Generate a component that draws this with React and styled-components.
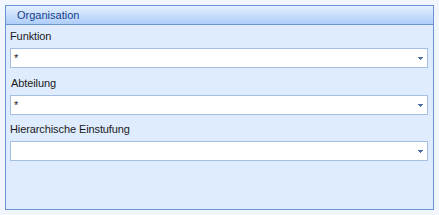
import React from "react";
import styled, { createGlobalStyle } from "styled-components";

const Global = createGlobalStyle`
  html, body { margin: 0; padding: 0; background: #f1f6fe; }
  body { font-family: Tahoma, "DejaVu Sans", "Liberation Sans", sans-serif; }
`;

const Page = styled.div`
  width: 439px;
  height: 215px;
  padding: 5px 5px 5px 5px;
  box-sizing: border-box;
  background: #f1f6fe;
`;

const Panel = styled.div`
  width: 429px;
  height: 205px;
  box-sizing: border-box;
  border: 1px solid #6a93d2;
  background: #dfecfe;
  display: flex;
  flex-direction: column;
`;

const Header = styled.div`
  height: 19px;
  box-sizing: border-box;
  border-bottom: 1px solid #6a93d2;
  background: linear-gradient(to bottom, #e6f0ff 0%, #c9defd 50%, #afcefa 100%);
  color: #15428b;
  font-family: "Liberation Sans", sans-serif;
  font-size: 11px;
  line-height: 18px;
  padding-left: 11px;
`;

const Body = styled.div`
  display: flex;
  flex-direction: column;
  padding: 5px 5px 0 4px;
`;

const Field = styled.div`
  display: flex;
  flex-direction: column;
  margin-top: ${(p) => p.$top}px;
`;

const Label = styled.div`
  font-family: "Liberation Sans", sans-serif;
  font-size: 11px;
  line-height: 13px;
  letter-spacing: -0.1px;
  color: #1a1a1a;
  height: 14px;
  margin-bottom: 4px;
  padding-left: ${(p) => p.$indent || 0}px;
`;

const Select = styled.div`
  width: 418px;
  height: 20px;
  box-sizing: border-box;
  border: 1px solid #a5bfe2;
  background: #ffffff;
  display: flex;
  align-items: center;
  justify-content: space-between;
  padding: 0 4px 0 3px;
  font-family: "Liberation Sans", sans-serif;
  font-size: 11px;
  color: #1a1a1a;
`;

const Value = styled.span`
  line-height: 18px;
`;

const Arrow = styled.svg`
  display: block;
  width: 5px;
  height: 3px;
  margin-top: 1px;
`;

function DropArrow() {
  return (
    <Arrow viewBox="0 0 5 3">
      <rect x="0" y="0" width="5" height="1" fill="#4c6fa6" />
      <rect x="1" y="1" width="3" height="1" fill="#4c6fa6" />
      <rect x="2" y="2" width="1" height="1" fill="#4c6fa6" />
    </Arrow>
  );
}

const fields = [
  { label: "Funktion", value: "*", top: 0, indent: 0 },
  { label: "Abteilung", value: "*", top: 9, indent: 1 },
  { label: "Hierarchische Einstufung", value: "", top: 8, indent: 0 },
];

export default function App() {
  return (
    <>
      <Global />
      <Page>
        <Panel>
          <Header>Organisation</Header>
          <Body>
            {fields.map((f) => (
              <Field key={f.label} $top={f.top}>
                <Label $indent={f.indent}>{f.label}</Label>
                <Select>
                  <Value>{f.value}</Value>
                  <DropArrow />
                </Select>
              </Field>
            ))}
          </Body>
        </Panel>
      </Page>
    </>
  );
}
